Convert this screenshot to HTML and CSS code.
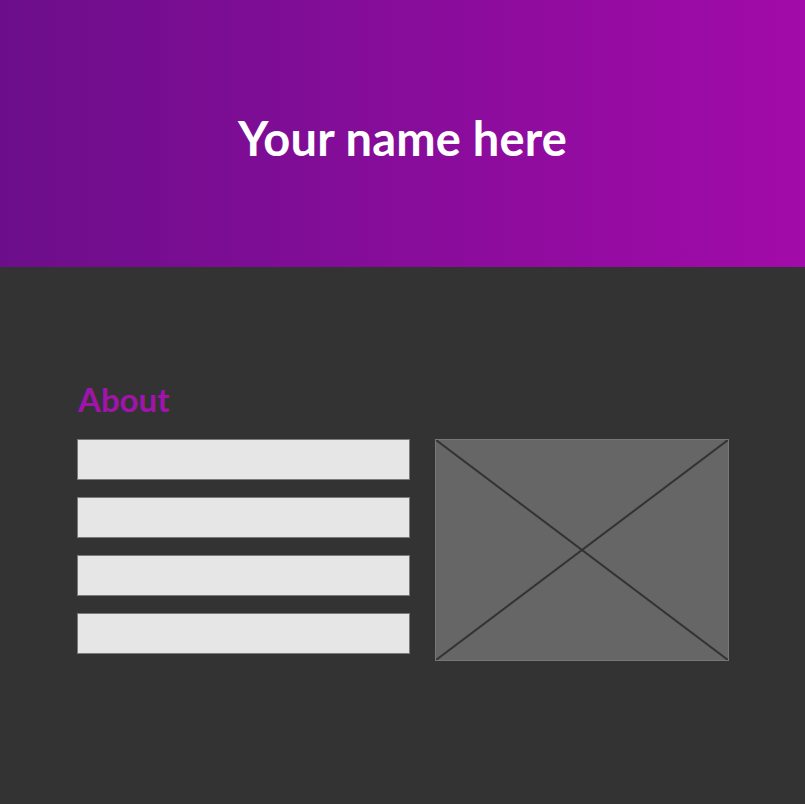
FILE: index.html
```html
<!DOCTYPE html>
<html>
<head>
<meta charset="utf-8">
<link rel="stylesheet" href="styles.css">
</head>
<body>
<header class="hero">
  <h1 class="hero-title">Your name here</h1>
</header>
<main class="content">
  <section class="about">
    <h2 class="about-title">About</h2>
    <div class="about-body">
      <div class="lines">
        <div class="line"></div>
        <div class="line"></div>
        <div class="line"></div>
        <div class="line"></div>
      </div>
      <div class="placeholder">
        <svg class="cross" viewBox="0 0 292 220" preserveAspectRatio="none">
          <line x1="0" y1="0" x2="292" y2="220" />
          <line x1="292" y1="0" x2="0" y2="220" />
        </svg>
      </div>
    </div>
  </section>
</main>
</body>
</html>
```
FILE: styles.css
```css
html, body {
  margin: 0;
  padding: 0;
  background: #333333;
  font-family: "Lato", "DejaVu Sans", sans-serif;
}
.hero {
  height: 267px;
  background: linear-gradient(to right, #6c0e8b, #a20ba9);
  display: flex;
  justify-content: center;
  box-sizing: border-box;
  padding-top: 110px;
}
.hero-title {
  margin: 0;
  color: #ffffff;
  font-size: 47px;
  font-weight: 700;
  letter-spacing: 0.2px;
  line-height: 56px;
  height: 56px;
}
.content {
  padding: 114px 0 0 77px;
}
.about-title {
  margin: 0 0 22px 1px;
  color: #a014ac;
  font-size: 33px;
  font-weight: 700;
  line-height: 36px;
}
.about-body {
  display: flex;
  gap: 25px;
}
.lines {
  width: 333px;
  display: flex;
  flex-direction: column;
  gap: 17px;
}
.line {
  height: 41px;
  box-sizing: border-box;
  background: #e6e6e6;
  border: 1px solid #7a7a7a;
}
.placeholder {
  width: 294px;
  height: 222px;
  box-sizing: border-box;
  background: #666666;
  border: 1px solid #777777;
}
.cross {
  display: block;
  width: 100%;
  height: 100%;
}
.cross line {
  stroke: #333333;
  stroke-width: 2;
  vector-effect: non-scaling-stroke;
}
```
